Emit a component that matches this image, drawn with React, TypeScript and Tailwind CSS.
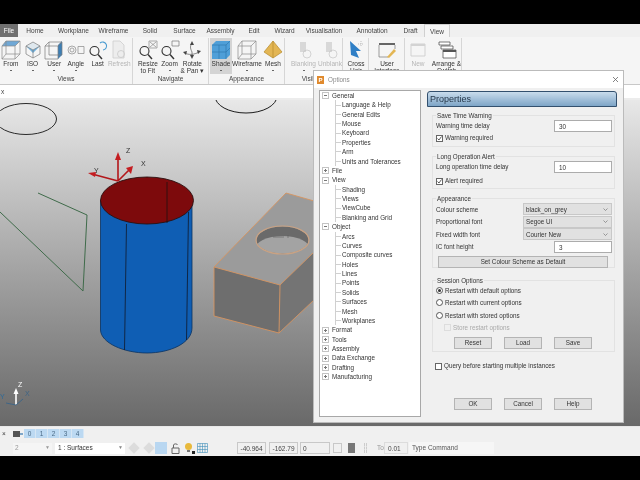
import type { ReactNode } from "react";

const tabs = [
  ["Home", "w-[34px]"],
  ["Workplane", "w-[43px]"],
  ["Wireframe", "w-[37px]"],
  ["Solid", "w-[36px]"],
  ["Surface", "w-[33px]"],
  ["Assembly", "w-[39px]"],
  ["Edit", "w-[28px]"],
  ["Wizard", "w-[33px]"],
  ["Visualisation", "w-[46px]"],
  ["Annotation", "w-[50px]"],
  ["Draft", "w-[27px]"],
];

const tree = [
  { label: "General", children: ["Language & Help", "General Edits", "Mouse", "Keyboard", "Properties", "Arm", "Units and Tolerances"] },
  { label: "File", children: [] },
  { label: "View", children: ["Shading", "Views", "ViewCube", "Blanking and Grid"] },
  { label: "Object", children: ["Arcs", "Curves", "Composite curves", "Holes", "Lines", "Points", "Solids", "Surfaces", "Mesh", "Workplanes"] },
  { label: "Format", children: [] },
  { label: "Tools", children: [] },
  { label: "Assembly", children: [] },
  { label: "Data Exchange", children: [] },
  { label: "Drafting", children: [] },
  { label: "Manufacturing", children: [] },
];

function Icon({ children }: { children: ReactNode }) {
  return (
    <svg width="20" height="20" viewBox="0 0 20 20" fill="none" strokeWidth="0.7">
      {children}
    </svg>
  );
}

function WireCube({ top }: { top?: string }) {
  return (
    <Icon>
      {top && <path d="M1 6 L5 1 H19 L14 6 Z" fill={top} />}
      <path d="M1 6 H14 V19 H1 Z M5 1 H19 V14 H5 Z M1 6 L5 1 M14 6 L19 1 M14 19 L19 14 M1 19 L5 14" stroke="#8a8a8a" />
    </Icon>
  );
}

function Magnifier() {
  return (
    <>
      <circle cx="6.5" cy="11" r="4.5" stroke="#333" strokeWidth="1.1" />
      <path d="M10 14.5 L14 19" stroke="#333" strokeWidth="1.4" />
    </>
  );
}

function RibbonItem({ icon, label, second, drop, active, faded, w = "w-[21.7px]" }: {
  icon: ReactNode;
  label: string;
  second?: string;
  drop?: boolean;
  active?: boolean;
  faded?: boolean;
  w?: string;
}) {
  return (
    <div className={`flex flex-col items-center shrink-0 h-[36px] pt-[2px] ${w} ${active ? "bg-[#d4d4d4]" : ""}`}>
      <div className={faded ? "h-[20px] opacity-30" : "h-[20px]"}>{icon}</div>
      <span className={`leading-[7px] whitespace-nowrap ${faded ? "text-[#b5b5b5]" : "text-[#333]"}`}>{label}</span>
      {second && <span className="leading-[7px] whitespace-nowrap text-[#333]">{second}</span>}
      {drop && <span className="mt-[3px] w-[2px] h-[1px] bg-[#666]" />}
    </div>
  );
}

function RibbonGroup({ caption, w, pad, children }: { caption?: string; w: string; pad?: string; children: ReactNode }) {
  return (
    <div className={`flex flex-col shrink-0 h-[46px] border-r border-[#d6d6d6] ${w}`}>
      <div className={`flex h-[36px] ${pad ?? ""}`}>{children}</div>
      {caption && <div className="flex-1 flex items-center justify-center text-[#444]">{caption}</div>}
    </div>
  );
}

function Ribbon() {
  return (
    <div className="flex h-[48px] pt-[1px] bg-[#f5f5f5] border-b border-[#c8c8c8]">
      <RibbonGroup caption="Views" w="w-[133px]">
        <RibbonItem drop label="From" icon={<WireCube top="#6fa8d6" />} />
        <RibbonItem drop label="ISO" icon={
          <Icon>
            <path d="M10 10 L3 6 L10 2 L17 6 Z" fill="#dfe8ee" />
            <path d="M3 6 L10 10 L17 6 L10 13 Z" fill="#6fb0dc" />
            <path d="M10 2 L17 6 V14 L10 18 L3 14 V6 Z M10 10 V18 M3 6 L10 10 L17 6" stroke="#7b7b7b" />
          </Icon>
        } />
        <RibbonItem drop label="User" icon={
          <Icon>
            <path d="M14 5 L18 1 V15 L14 19 Z" fill="#3c7fb5" />
            <path d="M1 6 H14 V19 H1 Z M5 2 H18 V15 H5 Z M1 6 L5 2 M14 6 L18 2" stroke="#7b7b7b" />
          </Icon>
        } />
        <RibbonItem drop label="Angle" icon={
          <Icon>
            <circle cx="6" cy="10" r="4" stroke="#888" />
            <circle cx="6" cy="10" r="2" stroke="#888" />
            <path d="M12 6.5 H18 V13.5 H12 Z" stroke="#888" />
          </Icon>
        } />
        <RibbonItem label="Last" icon={
          <Icon>
            <Magnifier />
            <path d="M12 3 A4 4 0 1 1 15 10" stroke="#4a9bd0" strokeWidth="1.1" />
          </Icon>
        } />
        <RibbonItem faded label="Refresh" icon={
          <Icon>
            <path d="M4 1 H11 L15 5 V18 H4 Z" stroke="#666" fill="#ddd" />
            <circle cx="12" cy="14" r="3.5" stroke="#555" />
          </Icon>
        } />
      </RibbonGroup>
      <RibbonGroup caption="Navigate" w="w-[76px]" pad="pl-[4px]">
        <RibbonItem label="Resize" second="to Fit" icon={
          <Icon>
            <Magnifier />
            <path d="M11 1 H19 V8 H11 Z M12 2 L18 7 M18 2 L12 7" stroke="#777" strokeWidth="0.6" />
          </Icon>
        } />
        <RibbonItem drop label="Zoom" icon={
          <Icon>
            <Magnifier />
            <path d="M12 1 H19 V6 H12 Z" stroke="#777" />
          </Icon>
        } />
        <RibbonItem label="Rotate" second="& Pan ▾" w="w-[24px]" icon={
          <Icon>
            <path d="M10 3 C8 6 8 8 10 12 M3 13 C6 15 12 15 17 12 M10 12 L10 17" stroke="#555" />
            <path d="M10 1 L12 5 H8 Z M1 12 L5 11 L4 15 Z M19 11 L15 10 L16 14 Z M10 19 L8 15 H12 Z" fill="#444" />
          </Icon>
        } />
      </RibbonGroup>
      <RibbonGroup caption="Appearance" w="w-[76px]" pad="pl-[1px]">
        <RibbonItem active drop label="Shade" w="w-[22px]" icon={
          <Icon>
            <path d="M1 5 L5 1 H19 V15 L15 19 H1 Z" fill="#4f9fd8" />
            <path d="M1 5 H15 V19 M15 5 L19 1 M8 5 V19 M1 12 H15 M15 12 L19 8" stroke="#2f78b0" />
          </Icon>
        } />
        <RibbonItem drop label="Wireframe" w="w-[30px]" icon={<WireCube />} />
        <RibbonItem drop label="Mesh" w="w-[22px]" icon={
          <Icon>
            <path d="M10 1 L19 12 L10 18 L1 12 Z" fill="#e3b654" />
            <path d="M10 1 L10 18 M10 1 L19 12 L10 18 L1 12 Z" stroke="#b58a2c" />
          </Icon>
        } />
      </RibbonGroup>
      <RibbonGroup caption="Visibility" w="w-[58px]" pad="pl-[5px]">
        <RibbonItem faded drop label="Blanking" w="w-[27px]" icon={
          <Icon>
            <path d="M6 2 H12 V12 H6 Z" fill="#999" />
            <circle cx="13" cy="14" r="4" stroke="#555" />
          </Icon>
        } />
        <RibbonItem faded drop label="Unblank" w="w-[26px]" icon={
          <Icon>
            <path d="M6 2 H12 V12 H6 Z" fill="#999" />
            <circle cx="13" cy="14" r="4" stroke="#555" />
          </Icon>
        } />
      </RibbonGroup>
      <RibbonGroup w="w-[26px]">
        <RibbonItem label="Cross" second="Hair" w="w-[26px]" icon={
          <Icon>
            <path d="M4 1 L15 11 H10 L13 18 L5 15 Z" fill="#2f7fc6" />
            <path d="M15 1 V7 M12 4 H18" stroke="#aaa" strokeDasharray="1 1" />
          </Icon>
        } />
      </RibbonGroup>
      <RibbonGroup w="w-[36px]">
        <RibbonItem label="User" second="Interface" w="w-[36px]" icon={
          <Icon>
            <path d="M2 3 H18 V5 H2 Z" fill="#666" />
            <path d="M2 5 V17 H11 M18 5 V9" stroke="#777" />
            <path d="M10 17 L17 9 L19 11 L12 18 Z" fill="#e3b654" />
          </Icon>
        } />
      </RibbonGroup>
      <RibbonGroup w="w-[57px]">
        <RibbonItem faded label="New" w="w-[26px]" icon={
          <Icon>
            <path d="M3 4 H17 V16 H3 Z" stroke="#555" />
            <path d="M3 4 H17 V6 H3 Z" fill="#888" />
          </Icon>
        } />
        <RibbonItem label="Arrange &" second="Switch" w="w-[31px]" icon={
          <Icon>
            <path d="M2 2 H13 V5 H2 Z M4 6 H16 V9 H4 Z" fill="#fff" stroke="#444" />
            <path d="M6 10 H19 V18 H6 Z" fill="#fff" stroke="#444" />
            <path d="M6 10 H19 V12 H6 Z" fill="#555" />
          </Icon>
        } />
      </RibbonGroup>
    </div>
  );
}

function Scene() {
  return (
    <svg className="absolute inset-0" width="640" height="326" viewBox="0 100 640 326" fill="none">
      <defs>
        <clipPath id="hole">
          <ellipse cx="282.500" cy="240" rx="26" ry="13.500" />
        </clipPath>
      </defs>
      <ellipse cx="26" cy="119" rx="30.500" ry="15.500" stroke="#2b2b2b" />
      <ellipse cx="246" cy="96" rx="31" ry="17" stroke="#1c1c1c" />
      <path d="M38 193 L87 215 L83 291 L0 212" stroke="#3f6b4a" />

      {/* cylinder */}
      <path d="M100.500 200 V330 C101 343 124 353 147 353 C170 353 192 343 192 328 V200 Z" fill="#0f5eb4" stroke="#0b3260" strokeWidth="0.8" />
      <ellipse cx="147" cy="200.500" rx="46.500" ry="23.500" fill="#7d0a0c" stroke="#2a1010" strokeWidth="0.9" />
      <path d="M126.500 224 L124.500 350 M188.500 212 L186.500 340" stroke="#10203a" strokeWidth="0.9" />
      <path d="M167 182 V223" stroke="#2a1010" strokeWidth="0.9" />

      {/* work plane axes */}
      <path d="M118 181 V157 M118 181 L129 170 M118 181 L92 174" stroke="#b3171b" strokeWidth="1.6" />
      <path d="M118 152 L121 160 H115 Z M133 166 L131 174 L126 168 Z M88 173 L96 172 L95 177 Z" fill="#c41d21" />
      <text x="126" y="153" fontSize="7" fontFamily="Liberation Sans, sans-serif" fill="#333">Z</text>
      <text x="141" y="166" fontSize="7" fontFamily="Liberation Sans, sans-serif" fill="#333">X</text>
      <text x="94" y="173" fontSize="7" fontFamily="Liberation Sans, sans-serif" fill="#333">Y</text>

      {/* block */}
      <path d="M214 267 L286 193 L314 201 V252 L280 285 Z" fill="#9b9b9b" />
      <path d="M214 267 L280 285 L279 333 L214 316 Z" fill="#6e6e6e" />
      <path d="M280 285 L314 252 V300 L279 333 Z" fill="#747474" />
      <path d="M314 201 L286 193 L214 267 L280 285 L314 252 M214 267 V316 L279 333 L314 300 M280 285 L279 333" stroke="#d79460" strokeWidth="0.9" />
      <ellipse cx="282.500" cy="240" rx="26" ry="13.500" fill="#6a6a6a" />
      <g clipPath="url(#hole)">
        <ellipse cx="282.500" cy="250" rx="28" ry="14" fill="#a3a3a3" />
      </g>
      <ellipse cx="282.500" cy="240" rx="26.500" ry="14" stroke="#c9a283" strokeWidth="1.2" />
      <path d="M273 237 H284 M288 235 V238" stroke="#5a5a5a" strokeWidth="0.6" />

      {/* corner triad */}
      <path d="M16 405 V391" stroke="#fff" strokeWidth="1.6" />
      <path d="M16 388 L18.500 394 H13.500 Z" fill="#fff" />
      <path d="M16 405 L6 403 M16 405 L23 399" stroke="#3a6488" strokeWidth="0.9" />
      <text x="18" y="387" fontSize="7" fontFamily="Liberation Sans, sans-serif" fill="#fff">Z</text>
      <text x="25" y="396" fontSize="7" fontFamily="Liberation Sans, sans-serif" fill="#3f6484">X</text>
      <text x="0" y="399" fontSize="7" fontFamily="Liberation Sans, sans-serif" fill="#2f6b99">Y</text>
    </svg>
  );
}

function Expander({ open }: { open: boolean }) {
  return (
    <svg className="shrink-0" width="7" height="7" viewBox="0 0 7 7" fill="none">
      <rect x="0.500" y="0.500" width="6" height="6" stroke="#c4c4c4" />
      <path d={open ? "M2 3.500 H5" : "M2 3.500 H5 M3.500 2 V5"} stroke="#777" />
    </svg>
  );
}

function Tree() {
  return (
    <div className="w-[102px] h-[327px] shrink-0 ml-[5px] bg-white border border-[#a8a8a8] pl-[2px] text-[#333]">
      {tree.map((node) => (
        <div key={node.label}>
          <div className="flex items-center gap-[3px] h-[9.380px] whitespace-nowrap">
            <Expander open={node.children.length > 0} />
            <span>{node.label}</span>
          </div>
          {node.children.map((child) => (
            <div key={child} className="flex items-center gap-[1px] h-[9.380px] ml-[13px] border-l border-[#d0d0d0] whitespace-nowrap">
              <span className="w-[5px] h-px bg-[#d0d0d0]" />
              <span>{child}</span>
            </div>
          ))}
        </div>
      ))}
    </div>
  );
}

function Group({ title, className, children }: { title: string; className: string; children: ReactNode }) {
  return (
    <div className={`relative ml-[5px] w-[183px] border border-[#e2e2e2] pl-[3px] pr-[2px] ${className}`}>
      <span className="absolute left-[3px] top-[-5px] px-[1px] leading-[9px] bg-[#f0f0f0] text-[#333]">{title}</span>
      {children}
    </div>
  );
}

function Check({ checked, label, disabled }: { checked?: boolean; label: string; disabled?: boolean }) {
  return (
    <div className={`flex items-center gap-[2px] h-[8px] whitespace-nowrap ${disabled ? "text-[#aaa]" : "text-[#333]"}`}>
      <span className={`flex items-center justify-center w-[7px] h-[7px] border ${disabled ? "border-[#ddd]" : "border-[#666] bg-white"}`}>
        {checked && (
          <svg width="5" height="5" viewBox="0 0 5 5" fill="none">
            <path d="M0.500 2.500 L2 4 L4.500 0.500" stroke="#333" strokeWidth="0.8" />
          </svg>
        )}
      </span>
      {label}
    </div>
  );
}

function Radio({ checked, label }: { checked?: boolean; label: string }) {
  return (
    <div className="flex items-center gap-[2px] h-[12.500px] whitespace-nowrap text-[#333]">
      <span className="flex items-center justify-center w-[7px] h-[7px] rounded-full border border-[#555] bg-white">
        {checked && <span className="w-[3px] h-[3px] rounded-full bg-[#333]" />}
      </span>
      {label}
    </div>
  );
}

function InputRow({ label, value }: { label: string; value: string }) {
  return (
    <div className="flex items-center justify-between text-[#333]">
      <span>{label}</span>
      <span className="w-[58px] h-[12px] pl-[4px] leading-[11px] bg-white border border-[#acacac]">{value}</span>
    </div>
  );
}

function SelectRow({ label, value }: { label: string; value: string }) {
  return (
    <div className="flex items-center justify-between h-[12.500px] text-[#333]">
      <span>{label}</span>
      <span className="flex items-center justify-between w-[89px] h-[12px] pl-[2px] pr-[3px] bg-[#e1e1e1] border border-[#c8c8c8]">
        {value}
        <svg width="5" height="3" viewBox="0 0 5 3" fill="none">
          <path d="M0.500 0.500 L2.500 2.500 L4.500 0.500" stroke="#777" strokeWidth="0.7" />
        </svg>
      </span>
    </div>
  );
}

function PushButton({ label, className = "w-[38px]" }: { label: string; className?: string }) {
  return (
    <span className={`flex items-center justify-center h-[12px] bg-[#e1e1e1] border border-[#b4b4b4] text-[#333] whitespace-nowrap ${className}`}>
      {label}
    </span>
  );
}

function Options() {
  return (
    <div className="absolute left-[313px] top-[70px] w-[311px] h-[353px] bg-[#f0f0f0] border border-[#bbbbbb] text-[6.300px]">
      <div className="flex items-center h-[17px] pl-[3px] pr-[4px] bg-white">
        <span className="w-[7px] h-[8px] mr-[4px] bg-[#e08a2e] text-white text-[6px] leading-[8px] text-center font-bold">P</span>
        <span className="flex-1 text-[#8a8a8a]">Options</span>
        <svg width="7" height="7" viewBox="0 0 7 7" fill="none">
          <path d="M1 1 L6 6 M6 1 L1 6" stroke="#666" strokeWidth="0.8" />
        </svg>
      </div>
      <div className="flex gap-[6px] pt-[2px]">
        <Tree />
        <div className="w-[190px] pt-[1px]">
          <div className="h-[16px] pl-[2px] text-[9px] leading-[15px] text-[#26384a] rounded-t-[3px] border border-[#33506e] bg-gradient-to-b from-[#c9dcec] to-[#7ea5c7]">
            Properties
          </div>
          <Group title="Save Time Warning" className="mt-[8px] h-[32px] pt-[4px]">
            <InputRow label="Warning time delay" value="30" />
            <div className="mt-[2px]"><Check checked label="Warning required" /></div>
          </Group>
          <Group title="Long Operation Alert" className="mt-[9px] h-[33px] pt-[4px]">
            <InputRow label="Long operation time delay" value="10" />
            <div className="mt-[4px]"><Check checked label="Alert required" /></div>
          </Group>
          <Group title="Appearance" className="mt-[9px] h-[70px] pt-[4px]">
            <SelectRow label="Colour scheme" value="black_on_grey" />
            <SelectRow label="Proportional font" value="Segoe UI" />
            <SelectRow label="Fixed width font" value="Courier New" />
            <InputRow label="IC font height" value="3" />
            <div className="mt-[3px] ml-[2px]"><PushButton label="Set Colour Scheme as Default" className="w-[170px]" /></div>
          </Group>
          <Group title="Session Options" className="mt-[12px] h-[72px] pt-[3px]">
            <Radio checked label="Restart with default options" />
            <Radio label="Restart with current options" />
            <Radio label="Restart with stored options" />
            <div className="flex items-center h-[12.500px] pl-[8px]"><Check disabled label="Store restart options" /></div>
            <div className="flex gap-[12px] mt-[3px] ml-[18px]">
              <PushButton label="Reset" />
              <PushButton label="Load" />
              <PushButton label="Save" />
            </div>
          </Group>
          <div className="mt-[10px] ml-[8px]"><Check label="Query before starting multiple instances" /></div>
          <div className="flex gap-[12px] mt-[28px] ml-[27px]">
            <PushButton label="OK" />
            <PushButton label="Cancel" />
            <PushButton label="Help" />
          </div>
        </div>
      </div>
    </div>
  );
}

function StatusBar() {
  return (
    <div className="h-[30px] bg-[#f0f0f0] border-t border-[#e8e8e8] text-[#444]">
      <div className="flex items-center h-[13px] pl-[2px]">
        <span className="w-[11px] text-[#333]">×</span>
        <svg className="w-[10px]" width="10" height="6" viewBox="0 0 10 6">
          <path d="M0 0 H7 V6 H0 Z" fill="#555" />
          <path d="M7 2 H10 V4 H7 Z" fill="#7fa6c8" />
        </svg>
        <div className="flex ml-[1px] bg-[#bcd9f2] text-[#4a6a86]">
          {["0", "1", "2", "3", "4"].map((n) => (
            <span key={n} className="w-[12px] h-[9px] leading-[9px] text-center border-r border-[#d6e6f4]">{n}</span>
          ))}
        </div>
      </div>
      <div className="flex items-center h-[12px] mt-[2px]">
        <span className="flex items-center justify-between w-[39px] h-[11px] ml-[13px] pl-[2px] pr-[2px] bg-[#f5f5f5] text-[#999]">
          2<span className="text-[5px]">▼</span>
        </span>
        <span className="flex items-center justify-between w-[70px] h-[11px] ml-[3px] pl-[3px] pr-[2px] bg-white text-[#333]">
          1 : Surfaces<span className="text-[5px] text-[#888]">▼</span>
        </span>
        <span className="w-[8px] h-[8px] ml-[5px] bg-[#dcdcdc] rotate-45" />
        <span className="w-[8px] h-[8px] ml-[7px] bg-[#dcdcdc] rotate-45" />
        <span className="w-[12px] h-[12px] ml-[2px] bg-[#b9d7f1]" />
        <svg className="ml-[4px]" width="9" height="11" viewBox="0 0 9 11" fill="none">
          <path d="M1 5 H8 V10.500 H1 Z M2.500 5 V2 C2.500 0.500 6.500 0.500 6.500 2" stroke="#666" />
        </svg>
        <svg className="ml-[4px]" width="11" height="12" viewBox="0 0 11 12">
          <circle cx="4.500" cy="4.500" r="3.500" fill="#e8b93c" />
          <path d="M3 8 H6 V10 H3 Z" fill="#777" />
          <path d="M8 9 H11 V12 H8 Z" fill="#222" />
        </svg>
        <svg className="ml-[2px]" width="11" height="10" viewBox="0 0 11 10" fill="none">
          <path d="M0.500 0.500 H10.500 V9.500 H0.500 Z M3 0.500 V9.500 M5.500 0.500 V9.500 M8 0.500 V9.500 M0.500 3.500 H10.500 M0.500 6.500 H10.500" stroke="#3f8fb8" strokeWidth="0.6" />
        </svg>
        <span className="w-[29px] h-[12px] ml-[29px] leading-[11px] text-center border border-[#c8c8c8]">-40.964</span>
        <span className="w-[29px] h-[12px] ml-[3px] leading-[11px] text-center border border-[#c8c8c8]">-162.79</span>
        <span className="w-[30px] h-[12px] ml-[2px] pl-[2px] leading-[11px] border border-[#c8c8c8]">0</span>
        <span className="w-[9px] h-[10px] ml-[3px] border border-[#c8c8c8]" />
        <span className="w-[7px] h-[10px] ml-[6px] bg-[#777]" />
        <span className="w-[3px] h-[10px] ml-[9px] border-x border-dashed border-[#ccc]" />
        <span className="ml-[10px] w-[7px] text-[#999]">Tol</span>
        <span className="w-[24px] h-[12px] leading-[11px] pl-[3px] border border-[#dcdcdc]">0.01</span>
        <span className="w-[85px] h-[12px] ml-[1px] pl-[3px] leading-[12px] bg-[#f6f6f6] text-[#555]">Type Command</span>
      </div>
    </div>
  );
}

export default function App() {
  return (
    <div className="relative flex flex-col w-[640px] h-[480px] overflow-hidden bg-black text-[6.500px] font-['Liberation_Sans',sans-serif] blur-[0.3px]">
      <div className="h-[24px] shrink-0" />

      {/* Tabs */}
      <div className="flex items-end h-[13px] shrink-0 bg-[#f0f0f0] text-[#444]">
        <span className="w-[18px] h-[13px] leading-[13px] text-center bg-[#707070] text-white">File</span>
        {tabs.map(([name, w]) => (
          <span key={name} className={`h-[13px] leading-[13px] text-center whitespace-nowrap ${w}`}>{name}</span>
        ))}
        <span className="w-[26px] h-[13px] leading-[13px] text-center bg-[#f5f5f5] border-x border-t border-[#d0d0d0]">View</span>
      </div>

      <Ribbon />

      {/* Prompt strip */}
      <div className="flex items-center h-[15px] shrink-0 pl-[1px] bg-white border-b-2 border-[#ececec] text-[#444]">x</div>

      {/* Viewport */}
      <div className="relative flex-1 bg-gradient-to-b from-[#e8e8e8] to-[#696969]">
        <Scene />
      </div>

      <StatusBar />
      <div className="h-[24px] shrink-0" />

      <Options />
    </div>
  );
}
